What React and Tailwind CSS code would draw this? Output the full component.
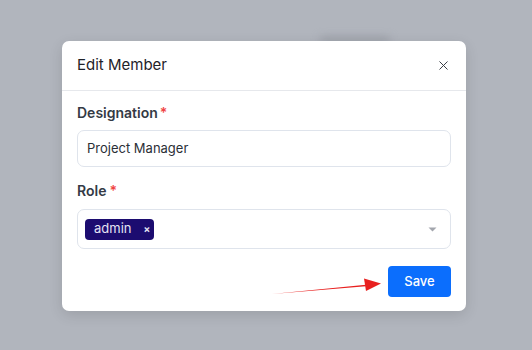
import { X } from "lucide-react";

function App() {
  return (
    <div
      className="relative w-full h-[350px] overflow-hidden bg-[#b1b5bd] pt-[41px] pl-[62px]"
      style={{ fontFamily: "Inter, 'Noto Sans', sans-serif" }}
    >
      {/* blurred shape behind the modal */}
      <div className="absolute left-[320px] top-[37px] w-[70px] h-[6px] rounded-full bg-[#989ca4] blur-[4px]" />

      <div className="relative w-[404px] h-[270px] bg-white rounded-[7px] shadow-[0_4px_14px_rgba(0,0,0,0.12)]">
        <div className="h-[50px] flex items-center justify-between px-[15px] border-b border-[#e6e8ec]">
          <h2 className="text-[15px] text-[#1f2229]">Edit Member</h2>
          <button className="text-[#3b3f47]">
            <X size={15} strokeWidth={1.6} />
          </button>
        </div>

        <div className="px-[15px] pt-[12px]">
          <label className="flex items-center text-[14px] font-semibold text-[#343a45] h-[18px]">
            Designation<span className="text-[#f04343] ml-[2px]">*</span>
          </label>
          <div className="mt-[9px] h-[37px] rounded-[7px] border border-[#dfe4ec] flex items-center px-[9px] text-[13px] text-[#2b2f36]">
            Project Manager
          </div>

          <label className="mt-[14px] flex items-center text-[14px] font-semibold text-[#343a45] h-[18px]">
            Role<span className="text-[#f04343] ml-[3px]">*</span>
          </label>
          <div className="mt-[10px] h-[40px] rounded-[7px] border border-[#dfe4ec] flex items-center justify-between pl-[7px] pr-[13px]">
            <span className="h-[21px] w-[69px] rounded-[4px] bg-[#1c0c70] flex items-center pl-[9px] gap-[12px] text-[13px] text-[#e4e2f3]">
              admin
              <span className="text-[10px] font-bold leading-none">×</span>
            </span>
            <svg width="9" height="5" viewBox="0 0 9 5">
              <path d="M0.5 0.5 L8.5 0.5 L4.5 4.5 Z" fill="#a3a6ad" />
            </svg>
          </div>

          <div className="flex justify-end mt-[17px]">
            <button className="w-[63px] h-[31px] rounded-[4px] bg-[#0b6efd] text-white text-[13px] font-medium">
              Save
            </button>
          </div>
        </div>
      </div>

      {/* annotation arrow */}
      <svg className="absolute left-0 top-0" width="532" height="350">
        <path d="M272 294 L366 284.7 L366 286.3 Z" fill="#e8201f" />
        <path d="M364 278.5 L381 283.5 L366 291 Z" fill="#e8201f" />
      </svg>
    </div>
  );
}

export default App;
